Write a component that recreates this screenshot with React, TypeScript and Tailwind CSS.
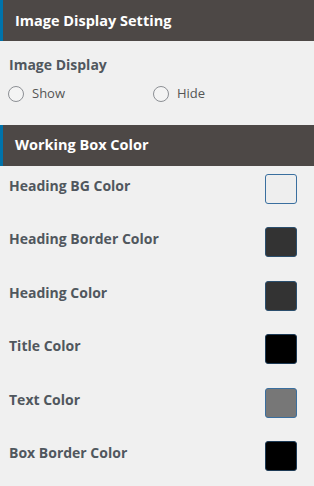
const rows = [
  { label: "Heading BG Color", color: "bg-[#eeeeee]", border: "border-[#3a6f9f]" },
  { label: "Heading Border Color", color: "bg-[#333333]", border: "border-[#2b4f6e]" },
  { label: "Heading Color", color: "bg-[#333333]", border: "border-[#2b4f6e]" },
  { label: "Title Color", color: "bg-[#000000]", border: "border-[#1d3a55]" },
  { label: "Text Color", color: "bg-[#777777]", border: "border-[#3a6f9f]" },
  { label: "Box Border Color", color: "bg-[#000000]", border: "border-[#1d3a55]" },
];

function Heading({ title }: { title: string }) {
  return (
    <div className="h-[41px] flex items-center bg-[#4d4846] border-l-[3px] border-[#0073aa] pl-[12px]">
      <span className="text-[14.5px] font-bold text-white">{title}</span>
    </div>
  );
}

function Radio({ label }: { label: string }) {
  return (
    <label className="flex items-center gap-[8px]">
      <span className="h-[16px] w-[16px] rounded-full border border-[#8c8f94] bg-[#f4f4f4]" />
      <span className="text-[13px] text-[#555]">{label}</span>
    </label>
  );
}

export default function App() {
  return (
    <div className="w-[314px] h-[486px] bg-[#f0f0f0] font-['Open_Sans',sans-serif] overflow-hidden">
      <Heading title="Image Display Setting" />
      <div className="px-[8px] pt-[13px] pb-[21px]">
        <div className="text-[14px] font-bold text-[#50575e] pl-[1px]">Image Display</div>
        <div className="flex mt-[9px]">
          <div className="w-[145px]">
            <Radio label="Show" />
          </div>
          <Radio label="Hide" />
        </div>
      </div>
      <Heading title="Working Box Color" />
      <div className="flex flex-col pl-[9px] pr-[17px] pt-[8px]">
        {rows.map((r) => (
          <div key={r.label} className="h-[53.5px] flex items-start justify-between">
            <span className="text-[14px] font-bold text-[#50575e] mt-[1px]">{r.label}</span>
            <span className={`h-[30px] w-[32px] rounded-[3px] border ${r.border} ${r.color}`} />
          </div>
        ))}
      </div>
    </div>
  );
}
